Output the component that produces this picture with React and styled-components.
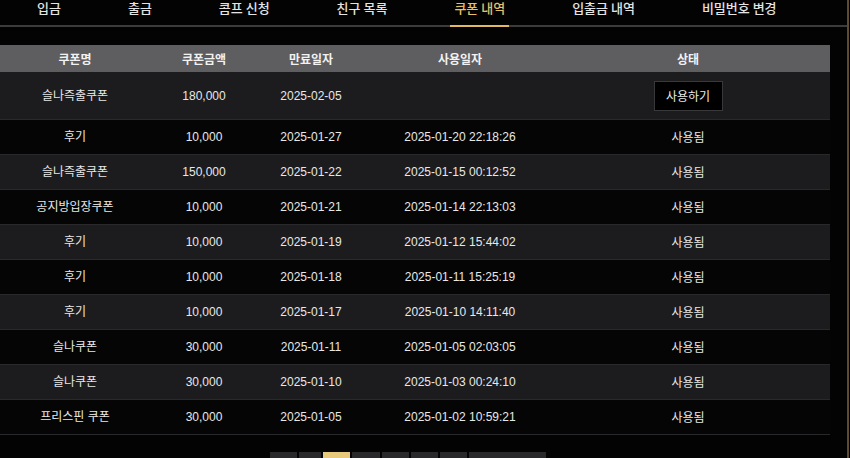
import React from 'react'
import styled, { createGlobalStyle } from 'styled-components'

const GlobalStyle = createGlobalStyle`
  html, body {
    margin: 0;
    padding: 0;
    background: #000;
  }
  body {
    font-family: "Liberation Sans", "Noto Sans CJK KR", sans-serif;
    color: #e6e6e6;
  }
`

const tabs = ['입금', '출금', '콤프 신청', '친구 목록', '쿠폰 내역', '입출금 내역', '비밀번호 변경']

const coupons = [
  { name: '슬나즉출쿠폰', amount: '180,000', expire: '2025-02-05', used: '', usable: true },
  { name: '후기', amount: '10,000', expire: '2025-01-27', used: '2025-01-20 22:18:26' },
  { name: '슬나즉출쿠폰', amount: '150,000', expire: '2025-01-22', used: '2025-01-15 00:12:52' },
  { name: '공지방입장쿠폰', amount: '10,000', expire: '2025-01-21', used: '2025-01-14 22:13:03' },
  { name: '후기', amount: '10,000', expire: '2025-01-19', used: '2025-01-12 15:44:02' },
  { name: '후기', amount: '10,000', expire: '2025-01-18', used: '2025-01-11 15:25:19' },
  { name: '후기', amount: '10,000', expire: '2025-01-17', used: '2025-01-10 14:11:40' },
  { name: '슬나쿠폰', amount: '30,000', expire: '2025-01-11', used: '2025-01-05 02:03:05' },
  { name: '슬나쿠폰', amount: '30,000', expire: '2025-01-10', used: '2025-01-03 00:24:10' },
  { name: '프리스핀 쿠폰', amount: '30,000', expire: '2025-01-05', used: '2025-01-02 10:59:21' }
]

const pages = [
  { label: '«', width: 27 },
  { label: '‹', width: 22 },
  { label: '1', width: 27, active: true },
  { label: '2', width: 28 },
  { label: '3', width: 27 },
  { label: '4', width: 27 },
  { label: '›', width: 27 },
  { label: '마지막 »', width: 77 }
]

export default function App() {
  return (
    <Page>
      <GlobalStyle />
      <Nav>
        {tabs.map((tab) => (
          <Tab key={tab} $active={tab === '쿠폰 내역'}>
            {tab}
          </Tab>
        ))}
      </Nav>

      <Content>
        <Table>
          <HeadRow>
            <Cell>쿠폰명</Cell>
            <Cell>쿠폰금액</Cell>
            <Cell>만료일자</Cell>
            <Cell>사용일자</Cell>
            <StatusCell>상태</StatusCell>
          </HeadRow>
          {coupons.map((c, i) => (
            <Row key={i} $odd={i % 2 === 0} $tall={c.usable}>
              <Cell>{c.name}</Cell>
              <Cell>{c.amount}</Cell>
              <Cell>{c.expire}</Cell>
              <Cell>{c.used}</Cell>
              <StatusCell>{c.usable ? <UseButton>사용하기</UseButton> : '사용됨'}</StatusCell>
            </Row>
          ))}
        </Table>

        <Pager>
          {pages.map((p, i) => (
            <PageBox key={i} $active={p.active} $width={p.width}>
              {p.label}
            </PageBox>
          ))}
        </Pager>
      </Content>
    </Page>
  )
}

const Page = styled.div`
  width: 847px;
  min-height: 100vh;
  border-right: 2px solid #5e4c31;
  background: #030303;
`

const Nav = styled.nav`
  display: flex;
  gap: 59px;
  height: 25px;
  padding-left: 33px;
  border-bottom: 2px solid #3b3b3d;
`

const Tab = styled.div`
  box-sizing: border-box;
  height: 27px;
  margin-bottom: -2px;
  padding: 0 4px;
  font-family: "Noto Sans CJK KR", sans-serif;
  font-size: 13px;
  font-weight: 500;
  line-height: 15px;
  white-space: nowrap;
  color: ${(p) => (p.$active ? '#e7c06a' : '#e4e4e4')};
  border-bottom: 2px solid ${(p) => (p.$active ? '#e2b95c' : 'transparent')};
`

const Content = styled.div`
  width: 830px;
  padding-top: 18px;
`

const Table = styled.div`
  display: flex;
  flex-direction: column;
`

const columns = `
  display: grid;
  grid-template-columns: 150px 108px 106px 192px 1fr;
  align-items: center;
  box-sizing: border-box;
`

const HeadRow = styled.div`
  ${columns}
  height: 27px;
  background: #5e5d60;
  font-family: "Noto Sans CJK KR", sans-serif;
  font-weight: 700;
  font-size: 12px;
  color: #f2f2f2;
`

const Row = styled.div`
  ${columns}
  height: ${(p) => (p.$tall ? '48px' : '35px')};
  background: ${(p) => (p.$odd ? '#1c1b1e' : '#050505')};
  border-bottom: 1px solid #29292b;
  font-size: 12px;
  color: #e8e8e8;
`

const Cell = styled.div`
  text-align: center;
  line-height: 16px;
  white-space: nowrap;
`

const StatusCell = styled(Cell)`
  padding-right: 10px;
  font-family: "Noto Sans CJK KR", sans-serif;
`

const UseButton = styled.button`
  box-sizing: border-box;
  width: 69px;
  height: 30px;
  background: #000;
  border: 1px solid #38383a;
  color: #ececec;
  font-family: "Noto Sans CJK KR", sans-serif;
  font-size: 12px;
  padding: 0;
  cursor: pointer;
`

const Pager = styled.div`
  display: flex;
  justify-content: center;
  gap: 2px;
  margin-top: 17px;
  padding-right: 14px;
`

const PageBox = styled.div`
  width: ${(p) => p.$width}px;
  height: 30px;
  padding-top: 8px;
  box-sizing: border-box;
  text-align: center;
  font-size: 12px;
  line-height: 14px;
  background: ${(p) => (p.$active ? '#e8c87a' : '#29292b')};
  color: ${(p) => (p.$active ? '#000' : '#ddd')};
`
